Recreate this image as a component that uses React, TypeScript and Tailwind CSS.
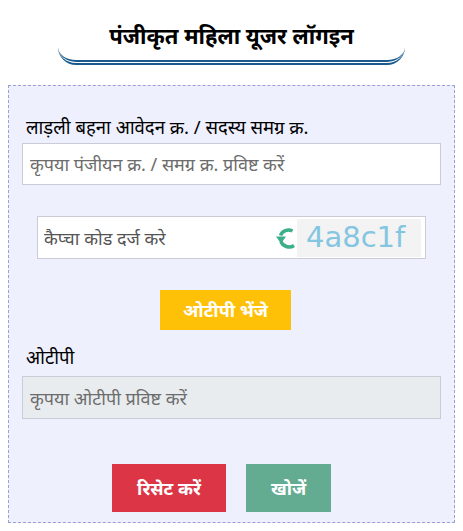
function RefreshIcon() {
  return (
    <svg viewBox="0 0 20 24" className="mr-[1px] h-[24px] w-[20px] shrink-0" fill="none">
      <path
        d="M16.5 5 A8.5 8 0 0 0 4.5 9.5 M5 15.5 A8.5 8 0 0 0 18 19.5"
        stroke="#3bae8a"
        strokeWidth="3.6"
        strokeLinecap="butt"
      />
      <path d="M0 10.5 L10 10.5 L5 17.5 Z" fill="#3bae8a" />
    </svg>
  );
}

export default function App() {
  return (
    <div className="min-h-[531px] bg-white font-['Noto_Sans','Liberation_Sans',sans-serif]">
      {/* heading */}
      <div className="flex justify-center pt-[20px]">
        <div className="w-[347px] rounded-b-[18px] border-b-[5px] border-double border-[#1b5a8e] pb-[10px] text-center">
          <h2 className="text-[22px] font-bold leading-[30px] text-black">
            पंजीकृत महिला यूजर लॉगइन
          </h2>
        </div>
      </div>

      {/* form box */}
      <div className="mx-[8px] mt-[20px] border border-dashed border-[#9b9fd6] bg-[#eef0fd] px-[13px] pb-[10px] pt-[27px]">
        <label className="block pl-[4px] text-[18.5px] leading-[27px] text-black">
          लाड़ली बहना आवेदन क्र. / सदस्य समग्र क्र.
        </label>
        <input
          className="mt-[3px] block h-[42px] w-full border border-[#c9ccd6] bg-white px-[7px] text-[18px] text-[#555] placeholder:text-[#6c6c6c] outline-none"
          placeholder="कृपया पंजीयन क्र. / समग्र क्र. प्रविष्ट करें"
        />

        <div className="mx-[15px] mt-[31px] flex h-[43px] items-center border border-[#c9ccd6] bg-white">
          <input
            className="h-full min-w-0 flex-1 bg-transparent px-[6px] text-[18px] placeholder:text-[#555] outline-none"
            placeholder="कैप्चा कोड दर्ज करे"
          />
          <RefreshIcon />
          <div className="mr-[4px] flex h-[38px] w-[124px] shrink-0 items-center bg-[#f2f3f2] pl-[9px] font-['DejaVu_Sans',sans-serif] text-[29px] leading-none text-[#84c6e1]">
            4a8c1f
          </div>
        </div>

        <div className="mt-[31px] flex justify-center pr-[12px]">
          <button className="h-[40px] w-[131px] bg-[#ffc107] text-[18px] font-bold text-white">
            ओटीपी भेंजे
          </button>
        </div>

        <label className="mt-[13px] block pl-[4px] text-[18.5px] leading-[27px] text-black">
          ओटीपी
        </label>
        <input
          disabled
          className="mt-[6px] block h-[43px] w-full border border-[#c9ccd6] bg-[#e9ecef] px-[7px] text-[18px] placeholder:text-[#6c6c6c] outline-none"
          placeholder="कृपया ओटीपी प्रविष्ट करें"
        />

        <div className="mt-[45px] flex justify-center gap-[20px] pr-[20px]">
          <button className="h-[48px] w-[114px] bg-[#dc3545] text-[18px] font-bold text-white">
            रिसेट करें
          </button>
          <button className="h-[48px] w-[85px] bg-[#63ab91] text-[18px] font-bold text-white">
            खोजें
          </button>
        </div>
      </div>
    </div>
  );
}
